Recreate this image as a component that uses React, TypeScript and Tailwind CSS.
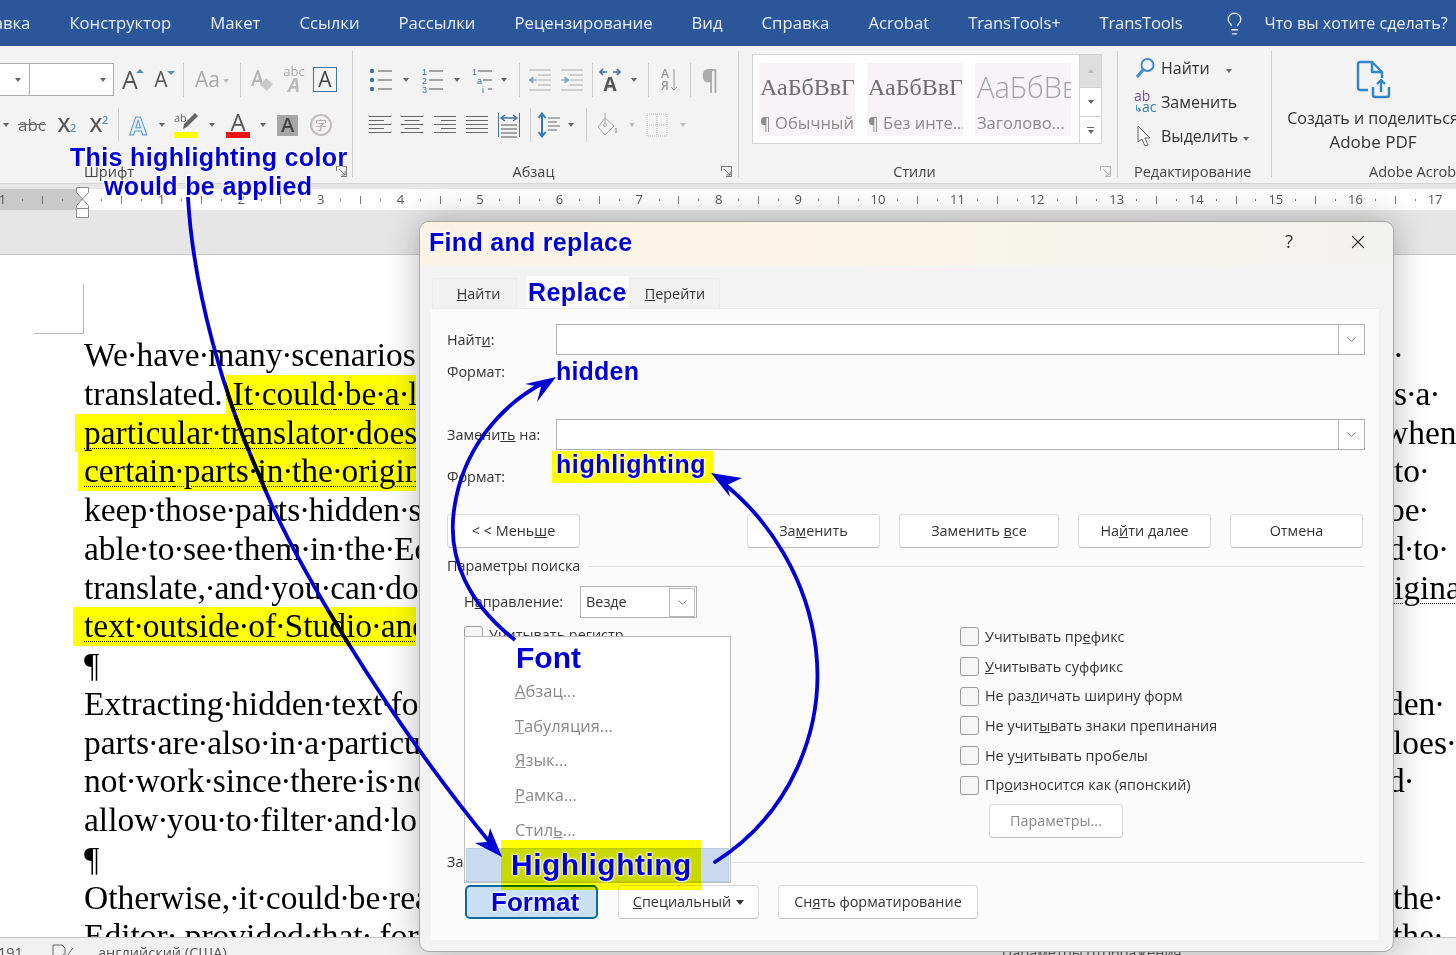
import React from 'react';
import { ChevronDown, X, Lightbulb } from 'lucide-react';

const BLUE = '#0000d6';
const ARROW_ONE = 'M188 197 C193 290 225 400 260 477 C290 555 385 715 492 845';
const ARROW_TWO = 'M515 640 C470 605 447 560 454 510 C462 450 500 405 545 382';
const ARROW_THREE = 'M715 862 C790 815 825 730 816 650 C808 580 770 520 722 482';

const Chev = () => (
  <span className="inline-block w-0 h-0 border-x-[3.5px] border-x-transparent border-t-[4px] border-t-[#666]" />
);

const Sep = ({ className = '' }: { className?: string }) => <div className={`w-px h-[34px] bg-[#cfcfcf] shrink-0 ${className}`} />;

const Slot = ({ className, children }: { className: string; children?: React.ReactNode }) => (
  <div className={`flex items-center justify-center shrink-0 ${className}`}>{children}</div>
);

const TextLines = ({ kind }: { kind: 'left' | 'center' | 'right' | 'justify' }) => {
  const rows = [0, 1, 2, 3, 4];
  const short = kind === 'justify' ? 22 : 15;
  return (
    <svg width="22" height="22" viewBox="0 0 22 22" stroke="#666" strokeWidth="1">
      {rows.map((r) => {
        const len = r % 2 ? short : 22;
        const x = kind === 'center' ? (22 - len) / 2 : kind === 'right' ? 22 - len : 0;
        return <line key={r} x1={x} x2={x + len} y1={2.5 + r * 4} y2={2.5 + r * 4} />;
      })}
    </svg>
  );
};

const ListIcon = ({ kind }: { kind: 'bullet' | 'number' | 'multi' }) => (
  <svg width="24" height="26" viewBox="0 0 24 26">
    {[4, 13, 22].map((y, i) =>
      kind === 'bullet' ? (
        <circle key={y} cx="3" cy={y} r="2.2" fill="#41719c" />
      ) : (
        <text key={y} x={kind === 'multi' ? 2 + i * 5 : 2} y={y + 3.5} fontSize="9" fill="#41719c" fontFamily="Liberation Sans">
          {kind === 'multi' ? ['1', 'a', 'i'][i] : i + 1}
        </text>
      ),
    )}
    {[4, 13, 22].map((y, i) => (
      <line key={y} x1={kind === 'multi' ? 8 + i * 5 : 9} x2={kind === 'multi' ? 22 : 23} y1={y} y2={y} stroke="#555" />
    ))}
  </svg>
);

const IndentIcon = ({ flip }: { flip?: boolean }) => (
  <svg width="22" height="24" viewBox="0 0 22 24" stroke="#aaa">
    {[2, 7, 12, 17, 22].map((y, i) => (
      <line key={y} x1={i === 0 || i === 4 ? 0 : 9} x2="22" y1={y} y2={y} />
    ))}
    <path d={flip ? 'M0 12h4v-3l4 3-4 3v-3' : 'M8 12H4V9l-4 3 4 3v-3'} fill="#7da7c9" stroke="#7da7c9" />
  </svg>
);

const Launcher = () => (
  <svg width="11" height="11" viewBox="0 0 11 11" fill="none" stroke="#777">
    <path d="M.5 5V.5H10.5V10.5H5" />
    <path d="M3 3 9 9M9 5.5V9H5.5" />
  </svg>
);

const Ribbon = () => (
  <div className="flex h-[138px] bg-[#f3f3f3] border-b border-[#d4d4d4] shrink-0 overflow-hidden">
    {/* Шрифт */}
    <div className="relative w-[352px] shrink-0 flex flex-col pt-[17px]">
      <div className="flex items-center h-[33px] text-[#666]">
        <div className="w-[30px] h-[33px] bg-white border border-l-0 border-[#ababab] flex items-center justify-end pr-[8px]"><Chev /></div>
        <div className="w-[84px] h-[33px] bg-white border border-l-0 border-[#ababab] flex items-center justify-end pr-[7px]"><Chev /></div>
        <Slot className="w-[32px]">
          <span className="relative text-[25px] leading-none text-[#555]">A<span className="absolute -right-[6px] top-[2px] w-0 h-0 border-x-[4px] border-x-transparent border-b-[4px] border-b-[#5b8db8]" /></span>
        </Slot>
        <Slot className="w-[30px]">
          <span className="relative text-[21px] leading-none text-[#555]">A<span className="absolute -right-[7px] top-[2px] w-0 h-0 border-x-[4px] border-x-transparent border-t-[4px] border-t-[#5b8db8]" /></span>
        </Slot>
        <Sep className="ml-[7px]" />
        <Slot className="w-[56px] gap-[3px] text-[21px] text-[#aaa]">Aa<span className="mt-[3px] w-0 h-0 border-x-[3.5px] border-x-transparent border-t-[4px] border-t-[#bbb]" /></Slot>
        <Sep />
        <Slot className="w-[40px] pl-[2px]">
          <svg width="26" height="26" viewBox="0 0 26 26">
            <path d="M8 3 2 19h2.4l1.4-4h5l.8 2.2L13.5 15 9.8 3Zm.9 3.4L10 12.8H6.6Z" fill="#b5b5b5" />
            <path d="M17 11 24 17 18 24 11 18Z" fill="#c9c9c9" />
          </svg>
        </Slot>
        <Slot className="w-[26px]">
          <div className="flex flex-col items-center leading-none text-[#aaa]">
            <span className="text-[13px] leading-[11px]">abc</span>
            <span className="text-[19px] font-bold italic leading-[17px] text-[#bbb]">A</span>
          </div>
        </Slot>
        <div className="ml-[6px] w-[24px] h-[25px] border border-[#41719c] flex items-center justify-center text-[21px] leading-none text-[#444]">A</div>
      </div>
      <div className="flex items-center h-[34px] mt-[12px] text-[#555]">
        <Slot className="w-[12px]"><Chev /></Slot>
        <Slot className="w-[40px] text-[17px] text-[#666] line-through">abc</Slot>
        <Slot className="w-[30px] text-[20px] font-semibold">X<sub className="text-[11px] text-[#5b8db8]">2</sub></Slot>
        <Slot className="w-[34px] text-[20px] font-semibold">X<sup className="text-[11px] text-[#5b8db8]">2</sup></Slot>
        <Sep className="ml-[2px]" />
        <Slot className="w-[38px] text-[25px] font-bold leading-none text-[#e8f1fa] [-webkit-text-stroke:1px_#5b9bd5]">A</Slot>
        <Slot className="w-[10px]"><Chev /></Slot>
        <Slot className="w-[38px]">
          <div className="flex flex-col items-center w-[25px]">
            <svg width="25" height="20" viewBox="0 0 25 20">
              <text x="0" y="10" fontSize="11" fill="#666" fontFamily="Open Sans">ab</text>
              <path d="M21 1 24 4 13 15 9 17 10 12Z" fill="#666" />
            </svg>
            <div className="w-[24px] h-[6px] bg-[#ffff00]" />
          </div>
        </Slot>
        <Slot className="w-[14px]"><Chev /></Slot>
        <Slot className="w-[38px]">
          <div className="flex flex-col items-center w-[24px]">
            <span className="text-[24px] leading-[20px] text-[#555]">A</span>
            <div className="w-[24px] h-[6px] bg-[#e81416]" />
          </div>
        </Slot>
        <Slot className="w-[12px]"><Chev /></Slot>
        <Slot className="w-[37px]">
          <div className="w-[21px] h-[21px] bg-[#a6a6a6] flex items-center justify-center text-[20px] leading-none font-semibold text-[#444]">A</div>
        </Slot>
        <Slot className="w-[30px]">
          <div className="w-[22px] h-[22px] rounded-full border-2 border-[#c4bcbc] flex items-center justify-center text-[12px] leading-none text-[#a8a0a0] font-['Noto_Sans_CJK_SC',sans-serif]">字</div>
        </Slot>
      </div>
      <div className="mt-auto h-[22px] flex items-center justify-center pr-[134px] text-[14.5px] text-[#444]">Шрифт</div>
      <div className="absolute right-[5px] bottom-[6px]"><Launcher /></div>
    </div>
    <Sep className="h-[126px] my-[5px]" />

    {/* Абзац */}
    <div className="relative w-[385px] shrink-0 flex flex-col pt-[17px]">
      <div className="flex items-center h-[33px] pl-[15px]">
        <Slot className="w-[25px]"><ListIcon kind="bullet" /></Slot>
        <Slot className="w-[26px]"><Chev /></Slot>
        <Slot className="w-[26px]"><ListIcon kind="number" /></Slot>
        <Slot className="w-[24px]"><Chev /></Slot>
        <Slot className="w-[26px]"><ListIcon kind="multi" /></Slot>
        <Slot className="w-[18px]"><Chev /></Slot>
        <Sep className="ml-[6px]" />
        <Slot className="ml-[9px] w-[22px]"><IndentIcon /></Slot>
        <Slot className="ml-[10px] w-[22px]"><IndentIcon flip /></Slot>
        <Sep className="ml-[9px]" />
        <Slot className="w-[34px]">
          <div className="flex flex-col items-center leading-none">
            <svg width="24" height="8" viewBox="0 0 24 8" fill="none" stroke="#41719c" strokeWidth="1.5"><path d="M9 4H2M5 1 2 4l3 3M15 4h7M19 1l3 3-3 3" /></svg>
            <span className="text-[19px] font-bold leading-[16px] text-[#555]">A</span>
          </div>
        </Slot>
        <Slot className="w-[14px]"><Chev /></Slot>
        <Sep className="ml-[7px]" />
        <Slot className="w-[41px] gap-[1px]">
          <div className="flex flex-col text-[12px] leading-[12px] text-[#999] font-semibold"><span>А</span><span>Я</span></div>
          <svg width="8" height="24" viewBox="0 0 8 24" fill="none" stroke="#999"><path d="M4 1v21M1 19l3 3 3-3" /></svg>
        </Slot>
        <Sep />
        <Slot className="w-[38px] text-[27px] font-semibold text-[#aaa] leading-none">¶</Slot>
      </div>
      <div className="flex items-center h-[34px] mt-[12px] pl-[15px]">
        <Slot className="w-[24px]"><TextLines kind="left" /></Slot>
        <Slot className="ml-[8px] w-[24px]"><TextLines kind="center" /></Slot>
        <Slot className="ml-[9px] w-[24px]"><TextLines kind="right" /></Slot>
        <Slot className="ml-[8px] w-[24px]"><TextLines kind="justify" /></Slot>
        <Slot className="ml-[8px] w-[24px]">
          <svg width="22" height="26" viewBox="0 0 22 26" fill="none">
            <path d="M.5 1v24M21.5 1v24" stroke="#41719c" />
            <path d="M3 6h16M7 3 3 6l4 3M15 3l4 3-4 3" stroke="#41719c" strokeWidth="1.4" />
            <path d="M3 13h16M3 17h16M3 21h16M3 25h16" stroke="#555" />
          </svg>
        </Slot>
        <Sep className="ml-[9px]" />
        <Slot className="ml-[6px] w-[23px]">
          <svg width="23" height="26" viewBox="0 0 23 26" fill="none">
            <path d="M5 2v22M1.5 6 5 1.5 8.5 6M1.5 20 5 24.5 8.5 20" stroke="#2f79b5" strokeWidth="2" />
            <path d="M11 6h12M11 10h9M11 14h12M11 18h9" stroke="#666" />
          </svg>
        </Slot>
        <Slot className="w-[22px]"><Chev /></Slot>
        <Sep className="ml-[4px]" />
        <Slot className="ml-[8px] w-[24px]">
          <svg width="22" height="26" viewBox="0 0 22 26" fill="none" stroke="#aaa">
            <path d="M9 6 18 14 9 23 2 15Z" />
            <path d="M9 1v11" />
            <circle cx="9" cy="13" r="1.4" />
            <path d="M20 16q2 3 0 5-2-2 0-5" />
          </svg>
        </Slot>
        <Slot className="w-[26px]"><span className="w-0 h-0 border-x-[3.5px] border-x-transparent border-t-[4px] border-t-[#bbb]" /></Slot>
        <Slot className="w-[24px]">
          <svg width="22" height="24" viewBox="0 0 22 24" fill="none" stroke="#bbb" strokeDasharray="1 1">
            <rect x="1" y="1" width="20" height="22" />
            <path d="M11 1v22M1 12h20" />
          </svg>
        </Slot>
        <Slot className="w-[28px]"><span className="w-0 h-0 border-x-[3.5px] border-x-transparent border-t-[4px] border-t-[#bbb]" /></Slot>
      </div>
      <div className="mt-auto h-[22px] flex items-center justify-center pr-[24px] text-[14.5px] text-[#444]">Абзац</div>
      <div className="absolute right-[6px] bottom-[6px]"><Launcher /></div>
    </div>
    <Sep className="h-[126px] my-[5px]" />

    {/* Стили */}
    <div className="relative w-[378px] shrink-0 flex flex-col pl-[13px] pt-[8px]">
      <div className="w-[350px] h-[90px] bg-white border border-[#d2d2d2] flex shrink-0">
        <div className="flex-1 flex gap-[12px] pl-[6px] pt-[8px]">
          <StyleTile sample="АаБбВвГ" label="¶ Обычный" />
          <StyleTile sample="АаБбВвГ" label="¶ Без инте..." />
          <div className="w-[96px] h-[73px] bg-[#f7f3f7] overflow-hidden flex flex-col pl-[2px]">
            <span className="h-[48px] flex items-center text-[29px] text-[#a3a3a3] font-light whitespace-nowrap">АаБбВв</span>
            <span className="text-[16.5px] text-[#8c8c8c] whitespace-nowrap">Заголово...</span>
          </div>
        </div>
        <div className="w-[22px] flex flex-col border-l border-[#d2d2d2]">
          <div className="h-[32px] bg-[#dedede] flex items-center justify-center"><span className="w-0 h-0 border-x-[3.5px] border-x-transparent border-b-[4px] border-b-[#bbb]" /></div>
          <div className="h-[29px] border-t border-[#d2d2d2] flex items-center justify-center"><Chev /></div>
          <div className="flex-1 border-t border-[#d2d2d2] flex flex-col items-center justify-center gap-[2px]"><div className="w-[7px] h-px bg-[#666]" /><Chev /></div>
        </div>
      </div>
      <div className="mt-auto h-[22px] flex items-center justify-center pr-[40px] text-[14.5px] text-[#444]">Стили</div>
      <div className="absolute right-[6px] bottom-[6px] opacity-50"><Launcher /></div>
    </div>
    <Sep className="h-[126px] my-[5px]" />

    {/* Редактирование */}
    <div className="w-[153px] shrink-0 flex flex-col pl-[16px] pt-[5px] text-[16px] text-[#333]">
      <div className="flex items-center h-[34px]">
        <svg width="22" height="22" viewBox="0 0 22 22" fill="none" stroke="#3b8ad0"><circle cx="13.5" cy="8" r="6" strokeWidth="2" /><path d="M9 13 3 20" strokeWidth="3" /></svg>
        <span className="ml-[5px]">Найти</span>
        <span className="ml-[16px] mb-[3px]"><Chev /></span>
      </div>
      <div className="flex items-center h-[34px]">
        <div className="w-[22px] flex flex-col text-[14px] leading-[11px] font-medium">
          <span className="text-[#7b4fa5]">ab</span>
          <span className="text-[#2f79b5]"><span className="text-[10px]">↳</span>ac</span>
        </div>
        <span className="ml-[5px]">Заменить</span>
      </div>
      <div className="flex items-center h-[34px]">
        <svg width="22" height="24" viewBox="0 0 22 24" fill="#fff" stroke="#666"><path d="M4 2 4 18 8 15 11 22 14 21 11 14 16 14Z" /></svg>
        <span className="ml-[5px]">Выделить</span>
        <span className="ml-[5px] mb-[3px]"><Chev /></span>
      </div>
      <div className="mt-auto h-[22px] flex items-center text-[14.5px] text-[#444] whitespace-nowrap">Редактирование</div>
    </div>
    <Sep className="h-[126px] my-[5px]" />

    {/* Adobe Acrobat */}
    <div className="flex-1 flex flex-col items-start pl-[13px] text-[#333] overflow-hidden">
      <div className="w-[176px] flex flex-col items-center pt-[14px]">
        <svg width="38" height="40" viewBox="0 0 38 40" fill="none" stroke="#2f86d0" strokeWidth="2.4" strokeLinejoin="round">
          <path d="M14 30H6a2 2 0 0 1-2-2V4a2 2 0 0 1 2-2h12l10 10v6" />
          <path d="M18 2v10h10" />
          <path d="M19 27v8a2 2 0 0 0 2 2h12a2 2 0 0 0 2-2v-8" />
          <path d="M27 32V20M23 24l4-4 4 4" />
        </svg>
        <span className="mt-[6px] text-[16px] whitespace-nowrap leading-[24px]">Создать и поделиться</span>
        <span className="text-[17px] leading-[24px]">Adobe PDF</span>
      </div>
      <div className="mt-auto h-[22px] ml-[84px] flex items-center text-[14.5px] text-[#444] whitespace-nowrap">Adobe Acrobat</div>
    </div>
  </div>
);

const StyleTile = ({ sample, label }: { sample: string; label: string }) => (
  <div className="w-[96px] h-[73px] bg-[#f7f3f7] overflow-hidden flex flex-col pl-[1px]">
    <span className="h-[48px] flex items-center text-[24px] text-[#6e6e6e] whitespace-nowrap font-['Liberation_Serif',serif]">{sample}</span>
    <span className="text-[16.5px] text-[#8c8c8c] whitespace-nowrap">{label}</span>
  </div>
);

const RulerCell = ({ n }: { n?: number }) => (
  <div className="w-[79.6px] h-full flex shrink-0">
    <RulerSlot><div className="w-px h-[2px] bg-[#777] shrink-0" /></RulerSlot>
    <RulerSlot><div className="w-px h-[8px] bg-[#777] shrink-0" /></RulerSlot>
    <RulerSlot><div className="w-px h-[2px] bg-[#777] shrink-0" /></RulerSlot>
    <RulerSlot>{n ? <span className="text-[13px] leading-none text-[#555] shrink-0">{n}</span> : <div className="w-px h-[2px] bg-[#777] shrink-0" />}</RulerSlot>
  </div>
);

const RulerSlot = ({ children }: { children: React.ReactNode }) => (
  <div className="w-[19.9px] h-full flex items-center justify-end">
    <div className="w-0 h-full flex justify-center items-center overflow-visible">{children}</div>
  </div>
);

const Ruler = () => {
  const inches = Array.from({ length: 17 }, (_, i) => i + 1);
  return (
    <div className="flex h-[21px] mt-[5px] shrink-0 overflow-hidden">
      <div className="w-[82px] bg-[#c9c9c9] flex justify-end shrink-0">
        <RulerCell n={1} />
        <RulerCell />
      </div>
      <div className="flex-1 bg-white flex">
        {inches.map((n) => (
          <RulerCell key={n} n={n} />
        ))}
      </div>
    </div>
  );
};

type DocLine = { left: string; right?: string; shift?: string; lead?: string; mark?: string; dotted?: boolean };

const LINES: DocLine[] = [
  { left: 'We·have·many·scenarios', right: '·' },
  { left: '', lead: 'translated.', right: 's·a·' },
  { left: 'particular·translator·does', mark: '-ml-[9px] pl-[9px] w-[341px]', right: 'when', shift: '-ml-[10px]' },
  { left: 'certain·parts·in·the·origin', mark: '-ml-[6px] pl-[6px] w-[338px]', right: 'to·' },
  { left: 'keep·those·parts·hidden·s', right: 'be·', shift: '-ml-[6px]' },
  { left: 'able·to·see·them·in·the·Ed', right: 'd·to·', shift: '-ml-[6px]' },
  { left: 'translate,·and·you·can·do', right: 'igina', dotted: true },
  { left: 'text·outside·of·Studio·and', mark: '-ml-[11px] pl-[11px] w-[343px]' },
  { left: '¶' },
  { left: 'Extracting·hidden·text·fo', right: 'den·', shift: '-ml-[7px]' },
  { left: 'parts·are·also·in·a·particu', right: 'loes·', shift: '-ml-[1px]' },
  { left: 'not·work·since·there·is·no', right: 'd·', shift: '-ml-[6px]' },
  { left: 'allow·you·to·filter·and·lo' },
  { left: '¶' },
  { left: 'Otherwise,·it·could·be·rea', right: 'the·', shift: '-ml-[1px]' },
  { left: 'Editor·,provided·that·,for', right: 'the·', shift: '-ml-[1px]' },
];

// Word's space marks sit closer than the font's own middle dot
const Dots = ({ text }: { text: string }) => (
  <>
    {text.split('·').map((word, i) => (
      <React.Fragment key={i}>
        {i > 0 && <span className="-mx-[1.3px]">·</span>}
        {word}
      </React.Fragment>
    ))}
  </>
);

const Page = () => (
  <div className="flex-1 min-h-0 bg-white overflow-hidden font-['Liberation_Serif',serif] text-[33.5px] text-black">
    <div className="ml-[34px] mt-[29px] w-[50px] h-[50px] border-r border-b border-[#b5b5b5]" />
    <div className="mt-[2px] flex flex-col">
      {LINES.map((line, i) => (
        <div key={i} className="flex h-[38.75px] leading-[38.75px] whitespace-nowrap">
          <div className="w-[419px] shrink-0 pl-[84px] overflow-hidden flex">
            {line.lead && (
              <>
                <span>{line.lead}</span>
                <span className="ml-[3px] pl-[7px] w-[190px] shrink-0 overflow-hidden bg-[#ffff00] underline decoration-dotted decoration-1 underline-offset-[4px]"><Dots text="It·could·be·a·le" /></span>
              </>
            )}
            {line.mark ? (
              <span className={`shrink-0 overflow-hidden bg-[#ffff00] underline decoration-dotted decoration-1 underline-offset-[4px] ${line.mark}`}><Dots text={line.left} /></span>
            ) : (
              !line.lead && <span><Dots text={line.left} /></span>
            )}
          </div>
          <div className="w-[975px] shrink-0" />
          <div className={`flex-1 overflow-hidden ${line.dotted ? 'underline decoration-dotted decoration-1 underline-offset-[4px]' : ''}`}>
            {line.right && <div className={line.shift}><Dots text={line.right} /></div>}
          </div>
        </div>
      ))}
    </div>
  </div>
);

const StatusBar = () => (
  <div className="h-[18px] shrink-0 bg-[#f1f1f1] border-t border-[#c8c8c8] overflow-hidden flex items-start pt-[6px] text-[14.5px] leading-[18px] text-[#555] whitespace-nowrap">
    <span className="-ml-[2px] w-[54px]">191</span>
    <svg width="22" height="18" viewBox="0 0 22 18" fill="none" stroke="#666"><path d="M1 1h9l3 3v12H1zM11 10l3 3 7-9" /></svg>
    <span className="ml-[24px]">английский (США)</span>
    <span className="ml-[775px]">Параметры отображения</span>
  </div>
);

const Btn = ({ className, children }: { className: string; children: React.ReactNode }) => (
  <div className={`h-[34px] shrink-0 bg-white border border-[#dadada] border-b-[#bdbdbd] rounded-[4px] flex items-center justify-center ${className}`}>
    {children}
  </div>
);

const Combo = ({ className = '' }: { className?: string }) => (
  <div className={`h-[31px] bg-white border border-[#b0b0b0] flex justify-end ${className}`}>
    <div className="w-[26px] border-l border-[#b8b8b8] flex items-center justify-center">
      <ChevronDown size={15} strokeWidth={1.2} color="#555" />
    </div>
  </div>
);

const Check = ({ children }: { children: React.ReactNode }) => (
  <div className="flex items-center h-[30px] gap-[6px]">
    <div className="w-[19px] h-[19px] rounded-[3px] border border-[#9c9c9c] bg-[#f6f6f6] shrink-0" />
    <span>{children}</span>
  </div>
);

const MENU = [
  <>Шрифт...</>,
  <><u>А</u>бзац...</>,
  <><u>Т</u>абуляция...</>,
  <><u>Я</u>зык...</>,
  <><u>Р</u>амка...</>,
  <>Стил<u>ь</u>...</>,
];

const Dialog = () => (
  <div className="absolute left-[419px] top-[221px] w-[975px] h-[731px] bg-[#f3f3f3] rounded-[10px] border border-[#a8a8a8] shadow-[0_0_34px_rgba(0,0,0,0.28)] overflow-hidden text-[14.4px] text-[#333] flex flex-col">
    <div className="h-[43px] shrink-0 bg-linear-to-r from-[#f9f4e6] via-[#f9f5e8] to-[#f2f2f0] flex items-center justify-end pb-[4px] text-[#333]">
      <span className="text-[18px] mr-[54px]">?</span>
      <span className="mr-[24px]"><X size={22} strokeWidth={1.3} /></span>
    </div>
    <div className="flex h-[31px] mt-[12px] ml-[12px] shrink-0 items-end">
      <div className="w-[85px] h-[30px] pl-[8px] bg-[#f1f1f1] border border-b-0 border-[#ececec] flex items-center justify-center"><span><u>Н</u>айти</span></div>
      <div className="ml-[9px] w-[102px] h-[32px] bg-[#fbfbfb]" />
      <div className="ml-[2px] w-[90px] h-[30px] bg-[#f1f1f1] border border-b-0 border-[#ececec] flex items-center justify-center"><span><u>П</u>ерейти</span></div>
    </div>
    <div className="relative ml-[11px] w-[948px] h-[632px] shrink-0 bg-[#fbfbfb] border-t border-[#ececec] pl-[16px] pr-[14px] pt-[15px]">
      <div className="flex items-center h-[31px]">
        <span className="w-[109px] shrink-0">Найт<u>и</u>:</span>
        <Combo className="flex-1" />
      </div>
      <div className="flex items-center h-[33px]">Формат:</div>
      <div className="flex items-center h-[31px] mt-[31px]">
        <span className="w-[109px] shrink-0">Замени<u>т</u><u>ь</u> на:</span>
        <Combo className="flex-1" />
      </div>
      <div className="flex items-center h-[53px]">Формат:</div>
      <div className="flex mt-[11px] pr-[2px]">
        <Btn className="w-[133px]"><span>&lt; &lt; Мень<u>ш</u>е</span></Btn>
        <Btn className="w-[133px] ml-[167px]"><span>За<u>м</u>енить</span></Btn>
        <Btn className="w-[160px] ml-[19px]"><span>Заменить <u>в</u>се</span></Btn>
        <Btn className="w-[133px] ml-[19px]"><span>На<u>й</u>ти далее</span></Btn>
        <Btn className="w-[133px] ml-[19px]">Отмена</Btn>
      </div>
      <div className="flex items-center h-[20px] mt-[8px] gap-[8px]">
        <span>Параметры поиска</span>
        <div className="flex-1 h-px bg-[#e2e2e2]" />
      </div>
      <div className="flex mt-[10px] h-[252px]">
        <div className="w-[513px] pl-[17px] shrink-0">
          <div className="flex items-center h-[32px]">
            <span className="w-[116px]">Н<u>а</u>правление:</span>
            <div className="w-[117px] h-[32px] bg-white border border-[#b0b0b0] flex items-center justify-between pl-[5px] pr-[1px]">
              Везде
              <div className="w-[26px] h-[29px] border border-[#b8b8b8] flex items-center justify-center">
                <ChevronDown size={15} strokeWidth={1.2} color="#555" />
              </div>
            </div>
          </div>
          <div className="mt-[2px]"><Check>Учитывать регистр</Check></div>
        </div>
        <div className="pt-[36px] flex flex-col">
          <Check>Учитывать пр<u>е</u>фикс</Check>
          <Check><u>У</u>читывать суффикс</Check>
          <Check>Не раз<u>л</u>ичать ширину форм</Check>
          <Check>Не учит<u>ы</u>вать знаки препинания</Check>
          <Check>Не у<u>ч</u>итывать пробелы</Check>
          <Check>Пр<u>о</u>износится как (японский)</Check>
          <Btn className="w-[134px] ml-[29px] mt-[4px] text-[#888]">Параметры...</Btn>
        </div>
      </div>
      <div className="flex items-center h-[20px] mt-[14px] gap-[8px]">
        <span>Заменить</span>
        <div className="flex-1 h-px bg-[#e2e2e2]" />
      </div>
      <div className="flex mt-[13px] pl-[18px]">
        <div className="w-[133px] h-[34px] bg-[#c7e0f4] border-2 border-[#0f6a9e] rounded-[5px]" />
        <Btn className="w-[141px] ml-[20px] gap-[5px]"><span><u>С</u>пециальный</span><span className="w-0 h-0 border-x-[4px] border-x-transparent border-t-[5px] border-t-[#333]" /></Btn>
        <Btn className="w-[200px] ml-[19px]"><span>Сн<u>я</u>ть форматирование</span></Btn>
      </div>
      <div className="absolute left-[33px] top-[327px] w-[267px] h-[247px] bg-white border border-[#bdbdbd] flex flex-col pt-[2px] text-[16.5px] text-[#8a8a8a]">
        {MENU.map((item, i) => (
          <div key={i} className="h-[34.8px] shrink-0 flex items-center pl-[50px]">
            <span className={i === 0 ? 'opacity-0' : ''}>{item}</span>
          </div>
        ))}
        <div className="mx-[1px] h-[34px] shrink-0 bg-[#c9d9ee] border border-[#b9cde6]" />
      </div>
    </div>
  </div>
);

const HALO = '[text-shadow:0_0_2px_#fff,0_0_2px_#fff,0_0_3px_#fff,0_0_3px_#fff]';

const Note = ({ className, children }: { className: string; children: React.ReactNode }) => (
  <div className={`absolute whitespace-nowrap font-['Liberation_Sans',sans-serif] font-bold leading-none text-[#0000d6] ${HALO} ${className}`}>{children}</div>
);

const Arrows = () => (
  <svg className="absolute inset-0 pointer-events-none" width="1456" height="955" viewBox="0 0 1456 955" fill="none">
    <defs>
      <clipPath id="marked">
        <rect x="226" y="376" width="190" height="36" />
        <rect x="75" y="415" width="340" height="36" />
        <rect x="78" y="455" width="340" height="36" />
        <rect x="73" y="611" width="344" height="35" />
      </clipPath>
    </defs>
    <path d={ARROW_ONE} stroke={BLUE} strokeWidth="3.8" />
    <path d={ARROW_ONE} stroke="#000" strokeWidth="3.8" clipPath="url(#marked)" />
    <path d={ARROW_TWO} stroke={BLUE} strokeWidth="3.8" />
    <path d={ARROW_THREE} stroke={BLUE} strokeWidth="3.8" strokeLinecap="round" />
    <path d="M502 857 475 843 487 842 490 828Z" fill={BLUE} />
    <path d="M556 377 525 384 541 387 537 402Z" fill={BLUE} />
    <path d="M711 473 742 478 727 485 730 497Z" fill={BLUE} />
  </svg>
);

const Annotations = () => (
  <>
    <div className="absolute left-[552px] top-[451px] w-[161px] h-[32px] bg-[#ffff00]" />
    <div className="absolute left-[501px] top-[840px] w-[200px] h-[50px] bg-[#ffff00] mix-blend-multiply" />
    <Arrows />
    <Note className="left-[70px] top-[145px] text-[25px] tracking-[0.35px]">This highlighting color</Note>
    <Note className="left-[104px] top-[174px] text-[25px] tracking-[0.35px]">would be applied</Note>
    <Note className="left-[429px] top-[230px] text-[25px] tracking-[0.3px]">Find and replace</Note>
    <Note className="left-[528px] top-[280px] text-[25px] tracking-[0.4px]">Replace</Note>
    <Note className="left-[556px] top-[359px] text-[25px] tracking-[0.2px]">hidden</Note>
    <Note className="left-[556px] top-[452px] text-[25px] tracking-[0.6px]">highlighting</Note>
    <Note className="left-[516px] top-[643px] text-[30px]">Font</Note>
    <Note className="left-[511px] top-[850px] text-[30px] tracking-[0.5px]">Highlighting</Note>
    <Note className="left-[491px] top-[889px] text-[26px]">Format</Note>
  </>
);

export default function App() {
  return (
    <div className="relative w-[1456px] h-[955px] overflow-hidden bg-white font-['Open_Sans',sans-serif]">
      <div className="flex flex-col h-full">
        <div className="h-[46px] shrink-0 bg-[#2b579a] flex items-center overflow-hidden whitespace-nowrap text-[16.7px] text-[#e9eef6]">
          <div className="flex gap-[39px] -ml-[33px] items-center">
            <span>Вставка</span>
            <span>Конструктор</span>
            <span>Макет</span>
            <span>Ссылки</span>
            <span>Рассылки</span>
            <span>Рецензирование</span>
            <span>Вид</span>
            <span>Справка</span>
            <span>Acrobat</span>
            <span className="tracking-[-0.2px]">TransTools+</span>
            <span className="tracking-[-0.2px]">TransTools</span>
          </div>
          <Lightbulb className="ml-[40px] shrink-0" size={25} strokeWidth={1.2} />
          <span className="ml-[17px] text-[16.1px]">Что вы хотите сделать?</span>
        </div>
        <Ribbon />
        <div className="shrink-0 bg-[#e6e6e6] flex flex-col">
          <Ruler />
          <div className="h-[45px] border-b border-[#c9c9c9]" />
        </div>
        <Page />
        <StatusBar />
      </div>
      <div className="absolute left-[76px] top-[187px] w-[13px] h-[32px]">
        <svg width="13" height="32" viewBox="0 0 13 32" fill="#fff" stroke="#8a8a8a"><path d="M.5.5h12v5L6.5 12 .5 5.5zM6.5 12l6 6.5v3h-12v-3zM.5 21.5h12v9h-12z" /></svg>
      </div>
      <Dialog />
      <Annotations />
    </div>
  );
}
